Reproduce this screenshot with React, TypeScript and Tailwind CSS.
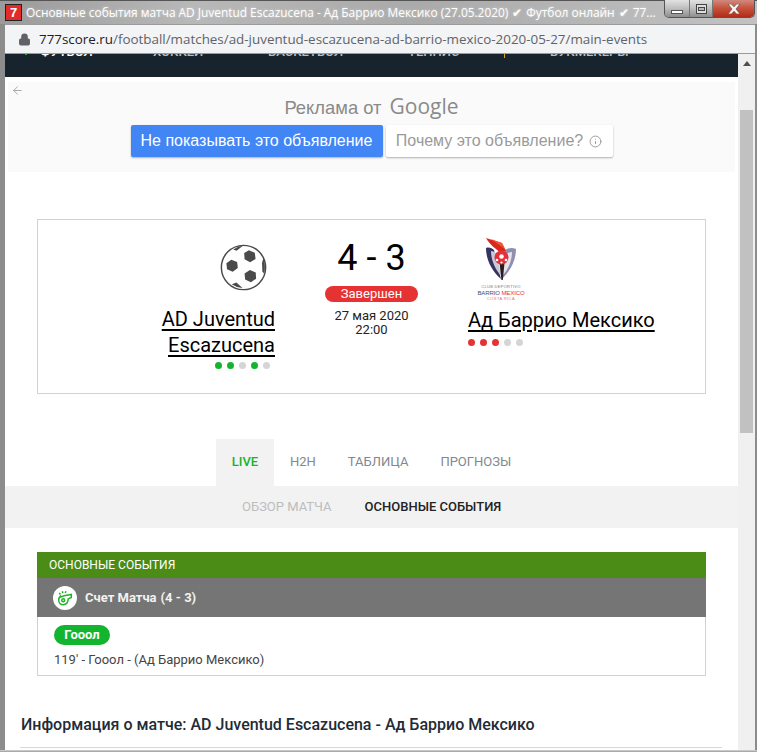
import { ArrowLeft, Info, Lock } from 'lucide-react'

const Dot = ({ c }: { c: string }) => <span className={`w-[7px] h-[7px] rounded-full ${c}`} />

function Ball() {
  return (
    <svg viewBox="0 0 48 48" className="w-[47px] h-[47px]">
      <circle cx="24" cy="24" r="22.6" fill="#fff" stroke="#4a4a4a" strokeWidth="1.5" />
      <path d="M29.5 6.5l6 2.5.8 6.3-5.6 3.4-5.6-3.2-.4-6.2z" fill="#4a4a4a" />
      <path d="M11.5 16l6 2.3.7 6.3-5.2 3.7-5.8-2.6-.7-6z" fill="#4a4a4a" />
      <path d="M30.5 26.5l6 2.6.4 6.4-5.4 3.6-5.8-2.8-.6-6.3z" fill="#4a4a4a" />
      <path d="M44.5 13.5q2.4 9 .6 17l-1.8-2.4-.4-8.6z" fill="#4a4a4a" />
      <path d="M12 41l4.8-1.6 6.2 5.6q-6-.4-11-4z" fill="#4a4a4a" />
      <path d="M13.5 5.5l5.5-3q2.5-.8 4-.5l-6 4.8z" fill="#4a4a4a" />
    </svg>
  )
}

function BarrioLogo() {
  return (
    <div className="w-[48px] ml-[9px] flex flex-col items-center">
      <svg viewBox="0 0 32 43" className="w-[32px] h-[43px]">
        <path d="M1 10c3-1 6 0 8 2 2 9 4 18 7 29C7 33 1 22 1 10z" fill="#35335f" />
        <path d="M31 11c-4-2-8-1-11 1l-3 29c8-8 14-18 14-30z" fill="#8f8fb0" />
        <path d="M6 13c2 0 4 1 6 3l4 22C10 31 6 22 6 13z" fill="#c9c9d8" />
        <path d="M27 14c-2 0-5 1-7 3l-3 21c6-6 10-15 10-24z" fill="#e4e4ee" />
        <path d="M1 0l16 5 4 8-5 2C11 11 5 7 1 0z" fill="#d8281f" />
        <path d="M6 1l11 4 3 6z" fill="#f05a3a" />
        <path d="M14 20h6l-2.2 22h-1.4z" fill="#2a1c1c" />
        <circle cx="16.5" cy="19.5" r="7" fill="#e5303a" />
        <circle cx="16.5" cy="18.5" r="2.3" fill="#fff" />
        <circle cx="12" cy="22" r="1.3" fill="#fff" />
        <circle cx="21" cy="22" r="1.3" fill="#fff" />
        <circle cx="16.5" cy="24.5" r="1.1" fill="#fff" />
      </svg>
      <div className="flex flex-col items-center mt-[4px] font-['Liberation_Sans',sans-serif] leading-none whitespace-nowrap">
        <span className="text-[4px] text-[#777] h-[5px] tracking-[0.3px]">CLUB DEPORTIVO</span>
        <span className="text-[6px] h-[7px] font-normal tracking-[-0.1px] text-[#4c4a78]">BARRIO <span className="text-[#e5303a]">MEXICO</span></span>
        <span className="text-[4px] text-[#d77] h-[4px] tracking-[0.4px]">COSTA RICA</span>
      </div>
    </div>
  )
}

function Whistle() {
  return (
    <span className="w-[24px] h-[24px] rounded-full bg-white flex items-center justify-center shrink-0">
      <svg viewBox="0 0 20 20" className="w-[18px] h-[18px]" fill="none" stroke="#22b32b" strokeWidth="1.7">
        <path d="M5 9l4-1.5 8-1.5v3.5l-3.5 1.5c.3 3.5-2 6.5-5.5 6.5-3 0-5-2.2-5-5 0-1.8.7-3.4 2-4.5z" />
        <circle cx="8" cy="12.5" r="1.6" />
        <path d="M3.5 4.5l1.5 1.5M7 2.5l.6 2.2M11 2.5l-.8 2" />
      </svg>
    </span>
  )
}

export default function App() {
  return (
    <div className="w-[757px] h-[752px] overflow-hidden flex flex-col bg-[#8c8c8c] font-['Roboto',sans-serif]">
      {/* window title */}
      <div className="h-[24px] shrink-0 flex items-center relative bg-[linear-gradient(90deg,#9a9a9a,#b8b8b8_25%,#aaaaaa_55%,#c2c2c2)] border-t border-[#555] pl-[5px]">
        <span className="w-[17px] h-[17px] bg-[#e32b2b] border border-[#222] flex items-center justify-center text-white text-[13px] font-bold leading-none font-['Liberation_Sans',sans-serif]">7</span>
        <span className="ml-[4px] text-[11.9px] text-white whitespace-nowrap font-['Open_Sans',sans-serif] [text-shadow:0_0_3px_rgba(255,255,255,0.5)]">
          Основные события матча AD Juventud Escazucena - Ад Баррио Мексико (27.05.2020)
          <span className="mx-[4px]">✔</span>Футбол онлайн<span className="mx-[4px]">✔</span>77...
        </span>
        <div className="absolute right-[2px] -top-px h-[18px] w-[91px] flex rounded-b-[5px] overflow-hidden border border-t-0 border-[#555]">
          <span className="w-[25px] flex items-center justify-center bg-[linear-gradient(#e2e2e2,#bdbdbd_50%,#8e8e8e)] border-r border-[#777]">
            <span className="w-[12px] h-[4px] mt-[7px] bg-white border border-[#555]" />
          </span>
          <span className="w-[23px] flex items-center justify-center bg-[linear-gradient(#e2e2e2,#bdbdbd_50%,#8e8e8e)] border-r border-[#777]">
            <span className="w-[11px] h-[10px] bg-[#ddd] border border-[#444] flex items-center justify-center">
              <span className="w-[7px] h-[4px] bg-[#bbb] border border-[#444]" />
            </span>
          </span>
          <span className="flex-1 flex items-center justify-center bg-[linear-gradient(#d08a7e,#c8553f_45%,#b02c18)]">
            <svg viewBox="0 0 14 10" className="w-[14px] h-[10px]">
              <path d="M1 0h3.5L7 2.8 9.5 0H13L9 5l4 5H9.5L7 7.2 4.5 10H1l4-5z" fill="#f4f4f4" stroke="#6e4a44" strokeWidth="0.7" />
            </svg>
          </span>
        </div>
      </div>

      {/* address bar */}
      <div className="h-[30px] shrink-0 ml-[5px] mr-[2px] flex items-center bg-[#f3f4f6] border-y border-[#9a9a9a] pl-[13px]">
        <Lock className="w-[13px] h-[13px] text-[#5f6368]" fill="#5f6368" strokeWidth={2} />
        <span className="ml-[8px] text-[13.4px] text-[#5f6368] whitespace-nowrap font-['Open_Sans',sans-serif]">
          <span className="text-[#202124]">777score.ru</span>/football/matches/ad-juventud-escazucena-ad-barrio-mexico-2020-05-27/main-events
        </span>
      </div>

      <div className="flex-1 flex ml-[5px] mr-[2px] min-h-0 bg-white">
        <main className="w-[733px] flex flex-col overflow-hidden">
          {/* cut-off site menu */}
          <nav className="h-[23px] shrink-0 bg-[#17242e] overflow-hidden relative">
            <span className="absolute left-[20px] top-0 w-[2px] h-[1px] bg-[#14b52c]" />
            <span className="absolute left-[499px] top-0 w-px h-[4px] bg-[#e0a020]" />
            <div className="flex -mt-[10px] text-[13px] font-medium text-[#b9bec2] uppercase leading-[15px]">
              <span className="ml-[35px] w-[113px] text-white">Футбол</span>
              <span className="w-[115px]">Хоккей</span>
              <span className="w-[140px]">Баскетбол</span>
              <span className="w-[142px]">Теннис</span>
              <span>Букмекеры</span>
            </div>
          </nav>

          {/* ad notice */}
          <section className="h-[90px] shrink-0 mt-[5px] mx-[3px] bg-[#fafafa] relative flex flex-col items-center">
            <ArrowLeft className="absolute left-[3px] top-[2px] w-[13px] h-[13px] text-[#9a9a9a]" strokeWidth={1.5} />
            <div className="flex items-baseline h-[43px] pt-[13px] text-[#8a8a8a] font-['Liberation_Sans',sans-serif]">
              <span className="text-[18.4px] leading-[22px]">Реклама от</span>
              <span className="ml-[8px] text-[21px] leading-[22px] font-medium font-['Open_Sans',sans-serif]">Google</span>
            </div>
            <div className="flex gap-[3px] font-['Liberation_Sans',sans-serif] text-[16px]">
              <span className="w-[252px] h-[32px] flex items-center justify-center bg-[#4285f4] text-white rounded-[2px] shadow-[0_1px_2px_rgba(0,0,0,0.3)]">Не показывать это объявление</span>
              <span className="w-[227px] h-[32px] flex items-center justify-center gap-[6px] bg-white text-[#9a9a9a] rounded-[2px] shadow-[0_1px_2px_rgba(0,0,0,0.3)]">
                Почему это объявление?
                <Info className="w-[13px] h-[13px]" strokeWidth={1.8} />
              </span>
            </div>
          </section>

          {/* score card */}
          <section className="mt-[47px] ml-[32px] w-[669px] h-[175px] shrink-0 border border-[#d2d2d2] flex">
            <div className="w-[237px] flex flex-col items-end pt-[24px]">
              <div className="mr-[8px]"><Ball /></div>
              <a className="mt-[15px] text-[20px] leading-[26px] font-normal text-black underline underline-offset-[3px] decoration-[2px] text-right w-[130px]">AD Juventud Escazucena</a>
              <div className="flex gap-[5px] mt-[4px] mr-[5px]">
                <Dot c="bg-[#12b52d]" /><Dot c="bg-[#12b52d]" /><Dot c="bg-[#d5d5d5]" /><Dot c="bg-[#12b52d]" /><Dot c="bg-[#d5d5d5]" />
              </div>
            </div>
            <div className="w-[193px] flex flex-col items-center pt-[17px]">
              <div className="text-[36px] leading-[42px] text-black">4 - 3</div>
              <div className="mt-[7px] w-[93px] h-[16px] rounded-full bg-[#e53232] text-white text-[13px] leading-[16px] text-center">Завершен</div>
              <div className="mt-[7px] text-[13px] leading-[14px] text-[#222] text-center">27 мая 2020<br />22:00</div>
            </div>
            <div className="flex-1 flex flex-col items-start pt-[18px]">
              <BarrioLogo />
              <a className="mt-[6px] text-[20px] leading-[26px] font-normal text-black underline underline-offset-[3px] decoration-[2px] whitespace-nowrap">Ад Баррио Мексико</a>
              <div className="flex gap-[5px] mt-[6px]">
                <Dot c="bg-[#e53232]" /><Dot c="bg-[#e53232]" /><Dot c="bg-[#e53232]" /><Dot c="bg-[#d5d5d5]" /><Dot c="bg-[#d5d5d5]" />
              </div>
            </div>
          </section>

          {/* tabs */}
          <div className="mt-[45px] ml-[211px] h-[47px] shrink-0 flex text-[13px] font-normal text-[#808890] uppercase">
            <span className="w-[58px] bg-[#f2f2f2] font-medium text-[#14b52c] flex items-center justify-center pb-[2px]">LIVE</span>
            <span className="ml-[16px] flex items-center pb-[2px]">H2H</span>
            <span className="ml-[32px] flex items-center pb-[2px]">Таблица</span>
            <span className="ml-[32px] flex items-center pb-[2px]">Прогнозы</span>
          </div>
          <div className="h-[42px] shrink-0 bg-[#f2f2f2] flex items-center text-[13px] uppercase">
            <span className="ml-[237px] text-[#bdbdbd]">Обзор матча</span>
            <span className="ml-[33px] font-medium text-[#222]">Основные события</span>
          </div>

          {/* events */}
          <section className="mt-[24px] ml-[32px] w-[669px] shrink-0">
            <div className="h-[26px] bg-[#4a8c16] text-white text-[12px] font-normal flex items-center pl-[12px] uppercase">Основные события</div>
            <div className="h-[39px] bg-[#757575] text-[#f2f2f2] text-[13px] font-bold flex items-center pl-[16px] gap-[8px]">
              <Whistle />
              <span>Счет Матча</span>
              <span className="-ml-[4px]">(4 - 3)</span>
            </div>
            <div className="h-[59px] border border-t-0 border-[#d2d2d2] pl-[16px] pt-[8px]">
              <span className="block w-[56px] h-[20px] rounded-full bg-[#12b52d] text-white text-[13px] font-bold leading-[20px] text-center">Гооол</span>
              <p className="mt-[6px] text-[13px] leading-[17px] text-[#444]">119' - Гооол - (Ад Баррио Мексико)</p>
            </div>
          </section>

          <h2 className="mt-[39px] ml-[16px] text-[16px] leading-[20px] font-medium text-[#222b36] whitespace-nowrap">Информация о матче: AD Juventud Escazucena - Ад Баррио Мексико</h2>
          <div className="mt-[12px] ml-[15px] w-[702px] h-px bg-[#d8d8d8] shrink-0" />
        </main>

        {/* scrollbar */}
        <aside className="w-[17px] shrink-0 bg-[#f0f0f0] flex flex-col items-center relative">
          <svg viewBox="0 0 8 5" className="w-[8px] h-[5px] mt-[7px]"><path d="M4 0l4 5H0z" fill="#505050" /></svg>
          <div className="absolute left-[2px] top-[56px] w-[13px] h-[323px] bg-[#c1c1c1]" />
        </aside>
      </div>
      <div className="h-[2px] shrink-0 bg-[linear-gradient(#d8d8d8,#9a9a9a)]" />
    </div>
  )
}
